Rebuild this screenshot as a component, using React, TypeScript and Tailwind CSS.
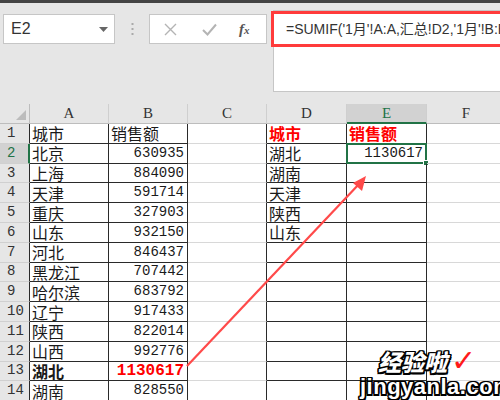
import React from "react";

const CJK = "font-['Noto_Sans_CJK_SC',sans-serif]";
const MONO = "font-['Liberation_Mono','Noto_Sans_CJK_SC',monospace]";
const SERIF = "font-['Liberation_Serif',serif]";

type Cell = { t: string; num?: boolean; bold?: boolean; red?: boolean };

const data: Cell[][] = [
  [{ t: "城市" }, { t: "销售额" }, { t: "" }, { t: "城市", bold: true, red: true }, { t: "销售额", bold: true, red: true }, { t: "" }],
  [{ t: "北京" }, { t: "630935", num: true }, { t: "" }, { t: "湖北" }, { t: "1130617", num: true }, { t: "" }],
  [{ t: "上海" }, { t: "884090", num: true }, { t: "" }, { t: "湖南" }, { t: "" }, { t: "" }],
  [{ t: "天津" }, { t: "591714", num: true }, { t: "" }, { t: "天津" }, { t: "" }, { t: "" }],
  [{ t: "重庆" }, { t: "327903", num: true }, { t: "" }, { t: "陕西" }, { t: "" }, { t: "" }],
  [{ t: "山东" }, { t: "932150", num: true }, { t: "" }, { t: "山东" }, { t: "" }, { t: "" }],
  [{ t: "河北" }, { t: "846437", num: true }, { t: "" }, { t: "" }, { t: "" }, { t: "" }],
  [{ t: "黑龙江" }, { t: "707442", num: true }, { t: "" }, { t: "" }, { t: "" }, { t: "" }],
  [{ t: "哈尔滨" }, { t: "683792", num: true }, { t: "" }, { t: "" }, { t: "" }, { t: "" }],
  [{ t: "辽宁" }, { t: "917433", num: true }, { t: "" }, { t: "" }, { t: "" }, { t: "" }],
  [{ t: "陕西" }, { t: "822014", num: true }, { t: "" }, { t: "" }, { t: "" }, { t: "" }],
  [{ t: "山西" }, { t: "992776", num: true }, { t: "" }, { t: "" }, { t: "" }, { t: "" }],
  [{ t: "湖北", bold: true }, { t: "1130617", num: true, bold: true, red: true }, { t: "" }, { t: "" }, { t: "" }, { t: "" }],
  [{ t: "湖南" }, { t: "828550", num: true }, { t: "" }, { t: "" }, { t: "" }, { t: "" }],
];

const colW = ["w-[79px]", "w-[79px]", "w-[79px]", "w-[80px]", "w-[80px]", "w-[79px]"];
const letters = ["A", "B", "C", "D", "E", "F"];
const inTable = [true, true, false, true, true, false];

function cellClass(ci: number) {
  const rightBlack = inTable[ci] || (ci + 1 < inTable.length && inTable[ci + 1]);
  const bottomBlack = inTable[ci];
  return [
    "relative shrink-0 h-full border-r border-b flex items-center",
    colW[ci],
    rightBlack ? "border-r-[#2a2a2a]" : "border-r-[#d8d8d8]",
    bottomBlack ? "border-b-[#2a2a2a]" : "border-b-[#d8d8d8]",
  ].join(" ");
}

function CellView({ c }: { c: Cell }) {
  if (!c.t) return null;
  if (c.num) {
    return (
      <span
        className={`w-full text-right pr-[3px] ${MONO} ${c.bold ? "font-bold text-[16px]" : "text-[14px]"} ${c.red ? "text-[#ff0000]" : "text-[#1a1a1a]"}`}
      >
        {c.t}
      </span>
    );
  }
  return (
    <span
      className={`pl-[2px] text-[16px] leading-none whitespace-nowrap ${CJK} ${c.bold ? "font-bold" : ""} ${c.red ? "text-[#ff0000]" : "text-[#1a1a1a]"}`}
    >
      {c.t}
    </span>
  );
}

const OUTLINE =
  "[text-shadow:1.5px_1.5px_0_#000,-1.5px_-1.5px_0_#000,1.5px_-1.5px_0_#000,-1.5px_1.5px_0_#000,0_1.5px_0_#000,0_-1.5px_0_#000,1.5px_0_0_#000,-1.5px_0_0_#000]";

export default function App() {
  return (
    <div className="relative w-[500px] h-[400px] overflow-hidden bg-[#e6e6e6]">
      <div className="h-[3px] bg-[#444444]" />
      {/* toolbar */}
      <div className="h-[101px] flex items-start pl-[3px]">
        <div className="shrink-0 mt-[11px] w-[112px] h-[30px] bg-white border border-[#c6c6c6] flex items-center justify-between pl-[7px] pr-[6px]">
          <span className="font-['Liberation_Sans',sans-serif] text-[16px] text-[#333]">E2</span>
          <svg width="9" height="5" viewBox="0 0 9 5">
            <path d="M0 0 L9 0 L4.5 5 Z" fill="#666" />
          </svg>
        </div>
        <div className="shrink-0 w-[34px] h-[30px] mt-[11px] flex items-center justify-center">
          <svg width="3" height="12" viewBox="0 0 3 12">
            <rect x="0.5" y="0" width="2" height="2" fill="#aaa" />
            <rect x="0.5" y="5" width="2" height="2" fill="#aaa" />
            <rect x="0.5" y="10" width="2" height="2" fill="#aaa" />
          </svg>
        </div>
        <div className="shrink-0 mt-[11px] w-[118px] h-[30px] bg-white border border-[#c6c6c6] flex items-center">
          <svg className="ml-[14px]" width="13" height="13" viewBox="0 0 13 13">
            <path d="M1 1 L12 12 M12 1 L1 12" stroke="#b4b4b4" strokeWidth="1.4" fill="none" />
          </svg>
          <svg className="ml-[25px]" width="15" height="13" viewBox="0 0 15 13">
            <path d="M1 7 L5.5 11.5 L14 1.5" stroke="#b4b4b4" strokeWidth="2" fill="none" />
          </svg>
          <span className={`ml-[22px] ${SERIF} italic font-bold text-[15px] text-[#555] leading-none`}>
            f<span className="text-[11px]">x</span>
          </span>
        </div>
        <div className="relative ml-[6px] mr-[-20px] mt-[7px] min-w-0 flex-1 h-[82px] bg-white border border-[#c6c6c6]">
          <div className="absolute -left-[3px] top-0 right-0 h-[36px] border-[3px] border-[#ff3b3b]" />
          <div className="pt-[8px] pl-[12px] whitespace-nowrap overflow-hidden font-['Liberation_Sans','Noto_Sans_CJK_SC',sans-serif] text-[14px] text-[#333]">
            =SUMIF('1月'!A:A,汇总!D2,'1月'!B:B)
          </div>
        </div>
      </div>

      {/* grid */}
      <div className="bg-white">
        <div className="flex h-[20px] bg-[#e6e6e6]">
          <div className="w-[30px] shrink-0 h-full border-r border-b border-[#bdbdbd] relative">
            <svg className="absolute right-[3px] bottom-[3px]" width="10" height="10" viewBox="0 0 10 10">
              <path d="M10 0 L10 10 L0 10 Z" fill="#bcbcbc" />
            </svg>
          </div>
          {letters.map((l, i) => (
            <div
              key={l}
              className={`shrink-0 h-full ${colW[i]} border-r border-r-[#cfcfcf] flex items-center justify-center ${SERIF} text-[15px] ${
                l === "E"
                  ? "bg-[#d2d2d2] text-[#217346] border-b-2 border-b-[#217346]"
                  : "text-[#333] border-b border-b-[#bdbdbd]"
              }`}
            >
              {l}
            </div>
          ))}
        </div>
        {data.map((row, ri) => (
          <div key={ri} className="flex h-[19.8px]">
            <div
              className={`w-[30px] shrink-0 h-full border-b border-b-[#d0d0d0] flex items-center pl-[7px] ${MONO} text-[14px] ${
                ri === 1
                  ? "bg-[#d2d2d2] text-[#217346] border-r-2 border-r-[#217346]"
                  : "bg-[#e6e6e6] text-[#333] border-r border-r-[#2a2a2a]"
              }`}
            >
              {ri + 1}
            </div>
            {row.map((c, ci) => (
              <div key={ci} className={cellClass(ci)}>
                <CellView c={c} />
                {ri === 1 && ci === 4 && (
                  <div className="absolute -left-[1px] -top-[1px] -right-[1px] -bottom-[1px] border-2 border-[#217346]">
                    <div className="absolute -right-[4px] -bottom-[4px] w-[6px] h-[6px] bg-[#217346] border border-white" />
                  </div>
                )}
              </div>
            ))}
          </div>
        ))}
      </div>

      {/* arrow */}
      <svg className="absolute left-0 top-0 pointer-events-none" width="500" height="400" viewBox="0 0 500 400">
        <line x1="187" y1="366" x2="360" y2="183" stroke="#ff4a4a" strokeWidth="2.2" />
        <path d="M366 176 L353 183 L362 191 Z" fill="#ff4a4a" />
      </svg>

      {/* watermark */}
      <div className="absolute left-[360px] top-[346px] flex flex-col items-start pointer-events-none">
        <div className="flex items-center ml-[18px]">
          <span className={`${CJK} font-black italic text-[23px] leading-none text-white ${OUTLINE}`}>经验啦</span>
          <span className="ml-[4px] text-[#ff1a1a] font-black text-[30px] leading-none font-['DejaVu_Sans',sans-serif]">✓</span>
        </div>
        <span className={`mt-[0px] font-['Liberation_Sans',sans-serif] font-bold text-[22px] leading-none text-white tracking-[0.5px] ${OUTLINE}`}>
          jingyanla.com
        </span>
      </div>
    </div>
  );
}
